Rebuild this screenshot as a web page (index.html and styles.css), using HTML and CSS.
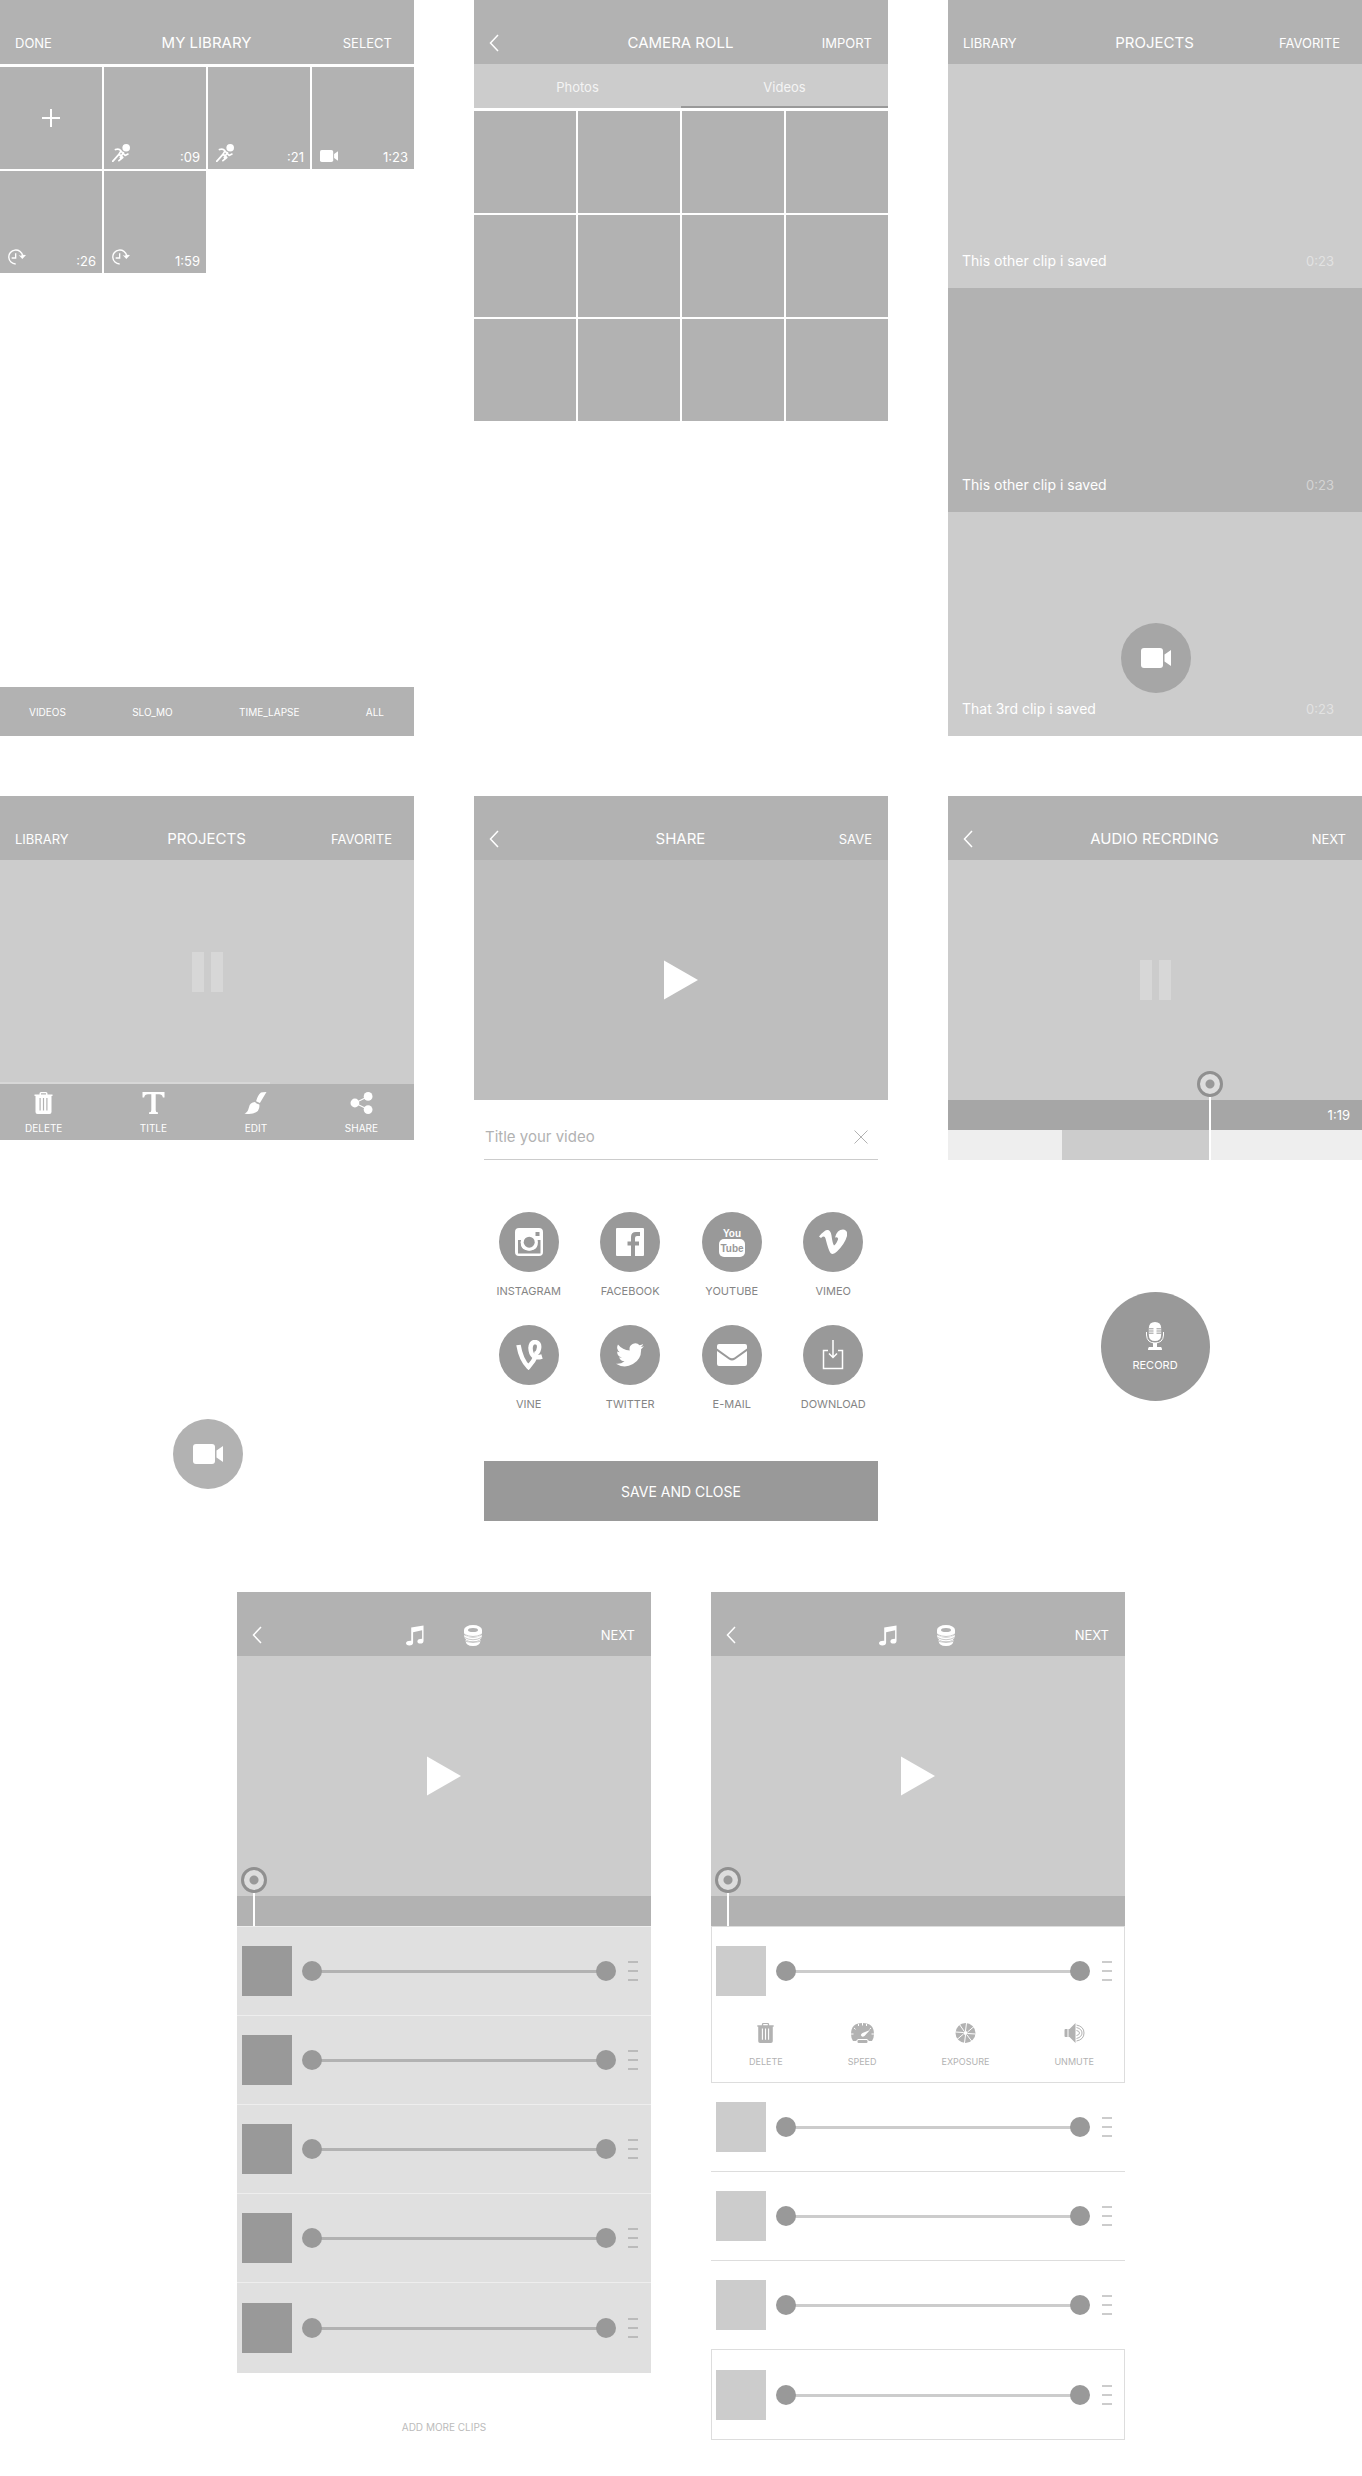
FILE: index.html
```html
<!DOCTYPE html>
<html lang="en">
<head>
<meta charset="utf-8">
<meta name="viewport" content="width=device-width, initial-scale=1">
<title>Video app wireframes</title>
<link rel="stylesheet" href="styles.css">
</head>
<body>
<svg class="sprite" aria-hidden="true">
  <symbol id="back" viewBox="0 0 10 18"><path d="M9 1L1.500 9L9 17" fill="none" stroke="currentColor" stroke-width="1.500"/></symbol>
  <symbol id="plus" viewBox="0 0 18 18"><path d="M8 0h2v8h8v2h-8v8H8v-8H0V8h8z"/></symbol>
  <symbol id="runner" viewBox="0 0 52 52"><circle cx="41" cy="11" r="11"/><path d="M10 16Q20 12 25 19L31 26L38 33L46 29M26 20L20 30L2 50M22 31L31 39L20 48M33 25L24 39" fill="none" stroke="currentColor" stroke-width="5" stroke-linecap="round" stroke-linejoin="round"/></symbol>
  <symbol id="lapse" viewBox="0 0 54 48"><path d="M44 20A21 21 0 1 0 23 45M23 13V27H11" fill="none" stroke="currentColor" stroke-width="4"/><path d="M32 18L38 20L44 17L54 18L43 30Z"/></symbol>
  <symbol id="video" viewBox="0 0 30 20"><rect width="22" height="20" rx="3"/><path d="M23.500 6.500L30 2V18L23.500 13.500Z"/></symbol>
  <symbol id="trash" viewBox="0 0 18 22"><path d="M0 2.500H5V1.500Q5 0 6.500 0H11.500Q13 0 13 1.500V2.500H18V4H17V20Q17 22 15 22H3Q1 22 1 20V4H0ZM6.500 2.500H11.500V1.200H6.500ZM5 6V18.500H6.200V6ZM8.400 6V18.500H9.600V6ZM11.800 6V18.500H13V6Z" fill-rule="evenodd"/></symbol>
  <symbol id="type" viewBox="0 0 20 20"><path d="M0 0H20V5H18.500Q18 2 15 2H12V16.500Q12 18.500 14 18.500V20H6V18.500Q8 18.500 8 16.500V2H5Q2 2 1.500 5H0Z"/></symbol>
  <symbol id="brush" viewBox="0 0 20 20"><path d="M15 0.500Q16 0 20 0L14 10L10.500 8.500Q12 3 15 0.500ZM9.500 9.200Q10.500 11 13.500 11.300Q14.500 19.500 4 20Q2 20 0 19.500Q3 18.500 4 14Q5 9.500 9.500 9.200Z"/></symbol>
  <symbol id="share" viewBox="0 0 20 20"><circle cx="4" cy="10" r="4"/><circle cx="16" cy="4" r="4"/><circle cx="16" cy="16" r="4"/><path d="M16 4L4 10L16 16" fill="none" stroke="currentColor" stroke-width="1"/></symbol>
  <symbol id="play" viewBox="0 0 34 40"><path d="M0 0.500L34 20L0 39.500Z"/></symbol>
  <symbol id="pause" viewBox="0 0 31 40"><path d="M0 0H12V40H0ZM19 0H31V40H19Z"/></symbol>
  <symbol id="close" viewBox="0 0 14 14"><path d="M0.500 0.500L13.500 13.500M13.500 0.500L0.500 13.500" stroke="currentColor"/></symbol>
  <symbol id="instagram" viewBox="0 0 28 28"><path d="M4 0H24Q28 0 28 4V24Q28 28 24 28H4Q0 28 0 24V4Q0 0 4 0ZM20.500 4V8H24.500V4ZM3 12V25.500H25.500V12H22.500Q24 22.500 14.200 22.500Q4.500 22.500 6 12Z" fill-rule="evenodd"/><circle cx="14.200" cy="14.200" r="8.500"/><circle cx="14.200" cy="14.200" r="5.500" class="cut"/></symbol>
  <symbol id="facebook" viewBox="0 0 28 28"><path d="M1 0H27Q28 0 28 1V27Q28 28 27 28H19V17.500H23V13.500H19V10Q19 8 21 8H24V4H20Q15 4 15 9V13.500H11.500V17.500H15V28H1Q0 28 0 27V1Q0 0 1 0Z"/></symbol>
  <symbol id="youtube" viewBox="0 0 28 32"><rect x="1" y="13" width="26" height="18" rx="5"/><text x="14" y="11" class="logo-word">You</text><text x="14" y="26" class="logo-word cut">Tube</text></symbol>
  <symbol id="vimeo" viewBox="0 0 28 25"><path d="M0 7Q5 1 8 0.500Q11.500 0 12.500 6Q13.500 14 15 16Q17 15 19 10Q19.500 7 16 8Q18 0 24 0Q29 0.500 28 6.500Q26 14 18 22Q14 26 11.500 23.500Q9.500 21 6.500 9Q5.500 5.500 2 8.500Z"/></symbol>
  <symbol id="vine" viewBox="0 0 26 30"><path d="M2.500 5Q5 20 12.500 27Q18 21 20.500 14.500M26 16.500Q15 20 14.500 8Q15 2 19 2Q24 2.500 23 8.500Q22 13.500 18.500 14" fill="none" stroke="currentColor" stroke-width="4.500"/></symbol>
  <symbol id="twitter" viewBox="0 0 24 20"><path d="M24 2.400a9.800 9.800 0 0 1-2.800.8A4.900 4.900 0 0 0 23.300.5a9.900 9.900 0 0 1-3.100 1.200 4.900 4.900 0 0 0-8.400 4.500A14 14 0 0 1 1.700 1a4.900 4.900 0 0 0 1.500 6.600 4.900 4.900 0 0 1-2.200-.6 4.900 4.900 0 0 0 4 4.900 5 5 0 0 1-2.300.1 4.900 4.900 0 0 0 4.600 3.400A9.900 9.900 0 0 1 0 17.500 14 14 0 0 0 21.500 5z"/></symbol>
  <symbol id="mail" viewBox="0 0 30 22"><path d="M2 0H28Q30 0 30 2V4.500L17.500 13.500Q15 15 12.500 13.500L0 4.500V2Q0 0 2 0ZM0 7L12 15.500Q15 17.500 18 15.500L30 7V20Q30 22 28 22H2Q0 22 0 20Z"/></symbol>
  <symbol id="download" viewBox="0 0 22 30"><path d="M6 10.500H1.500V28.500H20.500V10.500H16M11 0V17M7 13.500L11 17.500L15 13.500" fill="none" stroke="currentColor" stroke-width="1.500"/></symbol>
  <symbol id="mic" viewBox="0 0 18 28"><path d="M2.800 10V6Q3 0 9 0Q15 0 15.200 6V10V13Q15 19 9 19Q3 19 2.800 13Z"/><path d="M2.800 6.800H7.500M2.800 9H7.500M2.800 11.200H7.500M10.500 6.800H15.500M10.500 9H15.500M10.500 11.200H15.500" class="cut-line"/><path d="M0.500 10V13Q1 21 9 21Q17 21 17.500 13V10" fill="none" stroke="currentColor"/><path d="M7 21H11V25H15Q16 25.500 16 28H2Q2 25.500 3 25H7Z"/></symbol>
  <symbol id="music" viewBox="0 0 19 21"><path d="M5.500 2L18.500 0V16Q18.500 19 15 19Q12 19 12 16.500Q12.500 14 17 14V5L7.500 7V18Q7.500 21 3.500 21Q0 21 0 18.500Q0.500 15.800 5.500 16Z"/></symbol>
  <symbol id="coins" viewBox="0 0 18 21"><path d="M1.500 15Q9 19 16.500 15Q16.500 21 9 21Q1.500 21 1.500 15Z"/><path d="M0 10Q9 16 18 10Q18 16.500 9 16.500Q0 16.500 0 10Z"/><path d="M0 5H18V8Q17 12.500 9 12.500Q1 12.500 0 8Z"/><ellipse cx="9" cy="5" rx="9" ry="5"/><path d="M0.500 9.500Q9 13.500 17.500 9.500M0.500 12.500Q9 17 17.500 12.500M2 16.500Q9 18.500 16 16.500" fill="none" stroke="#b2b2b2" stroke-width=".7"/><ellipse cx="9" cy="5" rx="5" ry="2" fill="#b2b2b2"/></symbol>
  <symbol id="speed" viewBox="0 0 23 20"><path d="M0 11Q0 0 11.500 0Q23 0 23 11Q23 15 21 18H18L16 16H7L5 18H2Q0 15 0 11Z"/><rect x="6.500" y="17" width="10" height="3" rx="1"/><path d="M0 11H2.500M23 11H20.500M3 5L4.500 6.300M20 5L18.500 6.300M7.500 1V3M11.500 0V2.500M15.500 1V3" stroke="#fff"/><path d="M19 7L13.500 13Q11 14.500 10 12.500Q9.500 11 11.500 10Z" fill="#fff"/></symbol>
  <symbol id="exposure" viewBox="0 0 20 20"><circle cx="10" cy="10" r="10"/><path d="M10 8L11 0M12 9L18.500 3.500M12 10.500L20 11M11.500 12L16.500 18.500M10 12L9 20M8 11L1.500 16.500M8 9.500L0 9M8.500 8L4 1.500" stroke="#fff"/><circle cx="10" cy="10" r="2" fill="#fff"/></symbol>
  <symbol id="speaker" viewBox="0 0 20 20"><path d="M1 6H3V14H1Q0 14 0 13V7Q0 6 1 6ZM4 6H5L11 0V20L5 14H4Z"/><path d="M12 7.500Q15 8 15 10Q15 12 12 12.500M12 4.500Q17.500 6 17.500 10Q17.500 14 12 15.500M12 2Q19.500 3.500 19.500 10Q19.500 16.500 12 18" fill="none" stroke="currentColor"/></symbol>
</svg>

<main class="board">
  <section class="screen">
    <header class="bar"><button class="link">DONE</button><h2 class="title">MY LIBRARY</h2><button class="link link-inset">SELECT</button></header>
    <div class="tiles">
      <button class="tile tile-add" aria-label="Add clip"><svg class="i18"><use href="#plus"/></svg></button>
      <div class="tile"><svg class="i18"><use href="#runner"/></svg><span class="time">:09</span></div>
      <div class="tile"><svg class="i18"><use href="#runner"/></svg><span class="time">:21</span></div>
      <div class="tile"><svg class="i-wide"><use href="#video"/></svg><span class="time">1:23</span></div>
      <div class="tile"><svg class="i18"><use href="#lapse"/></svg><span class="time">:26</span></div>
      <div class="tile"><svg class="i18"><use href="#lapse"/></svg><span class="time">1:59</span></div>
    </div>
    <nav class="filters"><button>VIDEOS</button><button>SLO_MO</button><button>TIME_LAPSE</button><button>ALL</button></nav>
  </section>

  <section class="screen">
    <header class="bar"><button class="back" aria-label="Back"><svg><use href="#back"/></svg></button><h2 class="title">CAMERA ROLL</h2><button class="link">IMPORT</button></header>
    <nav class="tabs"><button>Photos</button><button class="active">Videos</button></nav>
    <div class="tiles">
      <div class="tile"></div><div class="tile"></div><div class="tile"></div><div class="tile"></div>
      <div class="tile"></div><div class="tile"></div><div class="tile"></div><div class="tile"></div>
      <div class="tile"></div><div class="tile"></div><div class="tile"></div><div class="tile"></div>
    </div>
  </section>

  <section class="screen">
    <header class="bar"><button class="link">LIBRARY</button><h2 class="title">PROJECTS</h2><button class="link link-inset">FAVORITE</button></header>
    <article class="clip"><span>This other clip i saved</span><span class="length">0:23</span></article>
    <article class="clip clip-dark"><span>This other clip i saved</span><span class="length">0:23</span></article>
    <article class="clip"><span>That 3rd clip i saved</span><span class="length">0:23</span></article>
    <button class="fab fab-dark" aria-label="New video"><svg><use href="#video"/></svg></button>
  </section>

  <section class="screen">
    <header class="bar"><button class="link">LIBRARY</button><h2 class="title">PROJECTS</h2><button class="link link-inset">FAVORITE</button></header>
    <div class="stage stage-short"><button class="pause" aria-label="Pause"><svg><use href="#pause"/></svg></button><div class="progress"><div style="width:65.2%"></div></div></div>
    <nav class="tools tools-dark">
      <button><svg><use href="#trash"/></svg>DELETE</button>
      <button><svg><use href="#type"/></svg>TITLE</button>
      <button><svg><use href="#brush"/></svg>EDIT</button>
      <button><svg><use href="#share"/></svg>SHARE</button>
    </nav>
    <button class="fab" aria-label="New video"><svg><use href="#video"/></svg></button>
  </section>

  <section class="screen">
    <header class="bar"><button class="back" aria-label="Back"><svg><use href="#back"/></svg></button><h2 class="title">SHARE</h2><button class="link">SAVE</button></header>
    <div class="stage stage-mid"><button class="play" aria-label="Play"><svg><use href="#play"/></svg></button></div>
    <div class="field"><input type="text" aria-label="Title your video" placeholder="Title your video"><button aria-label="Clear title"><svg><use href="#close"/></svg></button></div>
    <div class="targets">
      <button><span><svg class="i28"><use href="#instagram"/></svg></span>INSTAGRAM</button>
      <button><span><svg class="i28"><use href="#facebook"/></svg></span>FACEBOOK</button>
      <button><span><svg class="i32"><use href="#youtube"/></svg></span>YOUTUBE</button>
      <button><span><svg class="i28"><use href="#vimeo"/></svg></span>VIMEO</button>
      <button><span><svg class="i30"><use href="#vine"/></svg></span>VINE</button>
      <button><span><svg class="i28"><use href="#twitter"/></svg></span>TWITTER</button>
      <button><span><svg class="i30"><use href="#mail"/></svg></span>E-MAIL</button>
      <button><span><svg class="i30"><use href="#download"/></svg></span>DOWNLOAD</button>
    </div>
    <button class="save">SAVE AND CLOSE</button>
  </section>

  <section class="screen">
    <header class="bar"><button class="back" aria-label="Back"><svg><use href="#back"/></svg></button><h2 class="title">AUDIO RECRDING</h2><button class="link">NEXT</button></header>
    <div class="stage"><button class="pause" aria-label="Pause"><svg><use href="#pause"/></svg></button></div>
    <div class="timeline">
      <div class="strip strip-dark"><span class="time">1:19</span></div>
      <div class="strip strip-light"><div class="take" style="margin-left:27.5%;width:35.800%"></div></div>
      <div class="playhead" style="left:63.300%"><i></i></div>
    </div>
    <button class="record"><svg><use href="#mic"/></svg>RECORD</button>
  </section>
</main>

<div class="board-row">
  <section class="editor">
    <header class="bar"><button class="back" aria-label="Back"><svg><use href="#back"/></svg></button><div class="bar-icons"><button aria-label="Music"><svg><use href="#music"/></svg></button><button aria-label="Effects"><svg><use href="#coins"/></svg></button></div><button class="link">NEXT</button></header>
    <div class="stage"><button class="play" aria-label="Play"><svg><use href="#play"/></svg></button></div>
    <div class="timeline"><div class="strip"></div><div class="playhead" style="left:4.200%"><i></i></div></div>
    <div class="rows rows-filled">
      <div class="row"><div class="thumb"></div><div class="trim"><input type="range" value="0" aria-label="Clip 1 start"><input type="range" value="100" aria-label="Clip 1 end"></div><div class="grip"></div></div>
      <div class="row"><div class="thumb"></div><div class="trim"><input type="range" value="0" aria-label="Clip 2 start"><input type="range" value="100" aria-label="Clip 2 end"></div><div class="grip"></div></div>
      <div class="row"><div class="thumb"></div><div class="trim"><input type="range" value="0" aria-label="Clip 3 start"><input type="range" value="100" aria-label="Clip 3 end"></div><div class="grip"></div></div>
      <div class="row"><div class="thumb"></div><div class="trim"><input type="range" value="0" aria-label="Clip 4 start"><input type="range" value="100" aria-label="Clip 4 end"></div><div class="grip"></div></div>
      <div class="row"><div class="thumb"></div><div class="trim"><input type="range" value="0" aria-label="Clip 5 start"><input type="range" value="100" aria-label="Clip 5 end"></div><div class="grip"></div></div>
    </div>
    <button class="add">ADD MORE CLIPS</button>
  </section>

  <section class="editor">
    <header class="bar"><button class="back" aria-label="Back"><svg><use href="#back"/></svg></button><div class="bar-icons"><button aria-label="Music"><svg><use href="#music"/></svg></button><button aria-label="Effects"><svg><use href="#coins"/></svg></button></div><button class="link">NEXT</button></header>
    <div class="stage"><button class="play" aria-label="Play"><svg><use href="#play"/></svg></button></div>
    <div class="timeline"><div class="strip"></div><div class="playhead" style="left:4.200%"><i></i></div></div>
    <div class="rows rows-open">
      <div class="card">
        <div class="row"><div class="thumb"></div><div class="trim"><input type="range" value="0" aria-label="Clip 1 start"><input type="range" value="100" aria-label="Clip 1 end"></div><div class="grip"></div></div>
        <nav class="tools">
          <button><svg><use href="#trash"/></svg>DELETE</button>
          <button><svg><use href="#speed"/></svg>SPEED</button>
          <button><svg><use href="#exposure"/></svg>EXPOSURE</button>
          <button><svg><use href="#speaker"/></svg>UNMUTE</button>
        </nav>
      </div>
      <div class="row"><div class="thumb"></div><div class="trim"><input type="range" value="0" aria-label="Clip 2 start"><input type="range" value="100" aria-label="Clip 2 end"></div><div class="grip"></div></div>
      <div class="row"><div class="thumb"></div><div class="trim"><input type="range" value="0" aria-label="Clip 3 start"><input type="range" value="100" aria-label="Clip 3 end"></div><div class="grip"></div></div>
      <div class="row"><div class="thumb"></div><div class="trim"><input type="range" value="0" aria-label="Clip 4 start"><input type="range" value="100" aria-label="Clip 4 end"></div><div class="grip"></div></div>
      <div class="row"><div class="thumb"></div><div class="trim"><input type="range" value="0" aria-label="Clip 5 start"><input type="range" value="100" aria-label="Clip 5 end"></div><div class="grip"></div></div>
    </div>
  </section>
</div>
</body>
</html>
```
FILE: styles.css
```css
* { box-sizing: border-box; }
body { margin: 0; background: #fff; font-family: Inter, "Liberation Sans", sans-serif; font-size: 13px; color: #fff; }
button { padding: 0; border: 0; background: none; color: inherit; font: inherit; cursor: pointer; }
svg { display: block; fill: currentColor; overflow: visible; }
.sprite { position: absolute; width: 0; height: 0; }

/* Board */
.board { display: grid; grid-template-columns: repeat(3, minmax(0, 1fr)); gap: 60px; }
.board-row { display: flex; justify-content: center; gap: 60px; margin-top: 60px; padding-bottom: 34px; }
.screen { position: relative; display: flex; flex-direction: column; aspect-ratio: 414 / 736; }
.editor { flex: 0 0 calc((100% - 120px) / 3); }

/* Header */
.bar { display: grid; grid-template-columns: 1fr auto 1fr; align-items: center; height: 64px; padding: 22px 16px 0 15px; background: #b2b2b2; }
.title { margin: 0; font-size: 15px; line-height: 20px; font-weight: 400; }
.link { line-height: 20px; justify-self: start; }
.link:last-child { justify-self: end; }
.link-inset { margin-right: 6px; }
.back { justify-self: start; }
.back svg { width: 10px; height: 18px; }
.bar-icons { display: flex; gap: 40px; }
.bar-icons svg { width: 18px; height: 21px; }

/* Clip grid */
.tiles { display: grid; grid-template-columns: repeat(4, 1fr); gap: 2px; margin-top: 3px; }
.tile { display: flex; justify-content: space-between; align-items: flex-end; aspect-ratio: 1; padding: 0 6px 7px 8px; background: #b2b2b2; }
.tile-add { justify-content: center; align-items: center; padding: 0; }
.time { font-size: 13px; line-height: 10px; }
.i18 { width: 18px; height: 18px; }
.i-wide { width: 18px; height: 12px; }
.filters { display: flex; justify-content: space-between; height: 49px; margin-top: auto; padding: 0 30px 0 29px; background: #b2b2b2; font-size: 10px; }
.tabs { display: flex; height: 44px; background: #ccc; }
.tabs button { flex: 1; padding-top: 4px; border-bottom: 2px solid transparent; color: #f4f4f4; }
.tabs .active { border-color: #999; }

/* Projects */
.clip { display: flex; flex: 1; justify-content: space-between; align-items: flex-end; padding: 0 28px 17px 14px; background: #ccc; font-size: 14px; line-height: 20px; }
.clip-dark { background: #b2b2b2; }
.length { font-size: 13px; color: rgba(255, 255, 255, .45); }
.fab { position: absolute; bottom: 43px; left: calc(50% - 34px); display: grid; place-items: center; width: 70px; height: 70px; border-radius: 50%; background: #b2b2b2; }
.fab-dark { background: #a6a6a6; }
.fab svg { width: 30px; height: 20px; }

/* Player */
.stage { position: relative; display: flex; justify-content: center; align-items: center; height: 240px; background: #ccc; }
.stage-short { height: 224px; }
.stage-mid { background: #bebebe; }
.play svg { width: 34px; height: 40px; }
.pause { color: #d7d7d7; }
.pause svg { width: 31px; height: 40px; }
.progress { position: absolute; inset: auto 0 0; }
.progress div { height: 2px; background: #d7d7d7; }
.timeline { position: relative; }
.strip { display: flex; justify-content: flex-end; align-items: center; height: 30px; padding-right: 12px; background: #b2b2b2; }
.strip-dark { background: #a6a6a6; }
.strip-light { justify-content: flex-start; padding: 0; background: #eee; }
.take { height: 100%; background: #ccc; }
.playhead { position: absolute; top: -29px; bottom: 0; display: flex; flex-direction: column; align-items: center; width: 26px; margin-left: -13px; }
.playhead i { flex: none; width: 26px; height: 26px; border: 3px solid #909090; border-radius: 50%; background: radial-gradient(circle, #999 4px, #ddd 5px); }
.playhead::after { content: ""; flex: 1; width: 2px; background: #fff; }

/* Action buttons */
.tools { display: flex; justify-content: space-between; padding: 8px 30px 14px 37px; color: #b2b2b2; font-size: 9px; line-height: 12px; }
.tools button { display: flex; flex-direction: column; align-items: center; gap: 13px; }
.tools svg { width: 23px; height: 20px; }
.tools-dark { padding: 8px 36px 6px 25px; background: #b2b2b2; color: #fff; font-size: 10px; }
.tools-dark button { gap: 8px; }
.tools-dark svg { height: 22px; }

/* Share */
.field { display: flex; align-items: center; height: 60px; margin: 0 10px; padding: 14px 10px 0 0; border-bottom: 1px solid #ccc; }
.field input { flex: 1; min-width: 0; padding: 0 1px; border: 0; outline: 0; background: none; font: inherit; font-size: 15px; color: #666; }
.field input::placeholder { color: #b2b2b2; opacity: 1; }
.field button { color: #b2b2b2; }
.field svg { width: 14px; height: 14px; }
.targets { display: grid; grid-template-columns: repeat(4, 1fr); row-gap: 27px; padding: 52px 4px 50px; color: #858585; font-size: 11px; line-height: 14px; }
.targets button { display: flex; flex-direction: column; align-items: center; gap: 12px; }
.targets span { display: grid; place-items: center; width: 60px; height: 60px; border-radius: 50%; background: #999; color: #fff; }
.i28 { width: 28px; height: 28px; }
.i30 { width: 30px; height: 30px; }
.i32 { width: 28px; height: 32px; }
.cut { fill: #999; }
.cut-line { stroke: #999; stroke-width: 1; }
.logo-word { font: bold 10px "Liberation Sans Narrow", "Liberation Sans", sans-serif; text-anchor: middle; }
.save { height: 60px; margin: 0 10px; background: #999; font-size: 14px; }

/* Recorder */
.record { display: flex; flex-direction: column; justify-content: center; align-items: center; gap: 8px; width: 109px; height: 109px; margin: auto auto 131px; border-radius: 50%; background: #999; font-size: 11px; line-height: 14px; }
.record svg { width: 18px; height: 28px; }

/* Clip rows */
.row { display: flex; align-items: center; padding: 19px 13px 19px 5px; }
.thumb { width: 50px; height: 50px; margin-right: 10px; background: #ccc; }
.trim { display: grid; flex: 1; align-items: center; margin-right: 12px; background: linear-gradient(#ccc, #ccc) center / calc(100% - 20px) 3px no-repeat; }
.trim input { grid-area: 1 / 1; appearance: none; width: 100%; height: 20px; margin: 0; background: none; pointer-events: none; }
.trim input::-webkit-slider-thumb { appearance: none; width: 20px; height: 20px; border: 0; border-radius: 50%; background: #999; pointer-events: auto; }
.grip { width: 10px; height: 20px; background: repeating-linear-gradient(#ccc 0 2px, transparent 2px 9px); }
.rows-filled { background: #e0e0e0; }
.rows-filled .row { border-top: 1px solid #eee; }
.rows-filled .row:last-child { padding: 20px 13px 20px 5px; }
.rows-filled .thumb { background: #999; }
.rows-filled .trim { background-image: linear-gradient(#b2b2b2, #b2b2b2); }
.rows-filled .grip { background: repeating-linear-gradient(#bbb 0 2px, transparent 2px 9px); }
.card { border: 1px solid #ddd; }
.card .row { padding-left: 4px; padding-right: 12px; }
.rows-open > .row + .row { border-top: 1px solid #ddd; }
.rows-open > .row:last-child { padding: 20px 12px 19px 4px; border: 1px solid #ddd; }
.add { display: block; margin: 47px auto 0; color: #bbb; font-size: 10px; line-height: 14px; }
```
